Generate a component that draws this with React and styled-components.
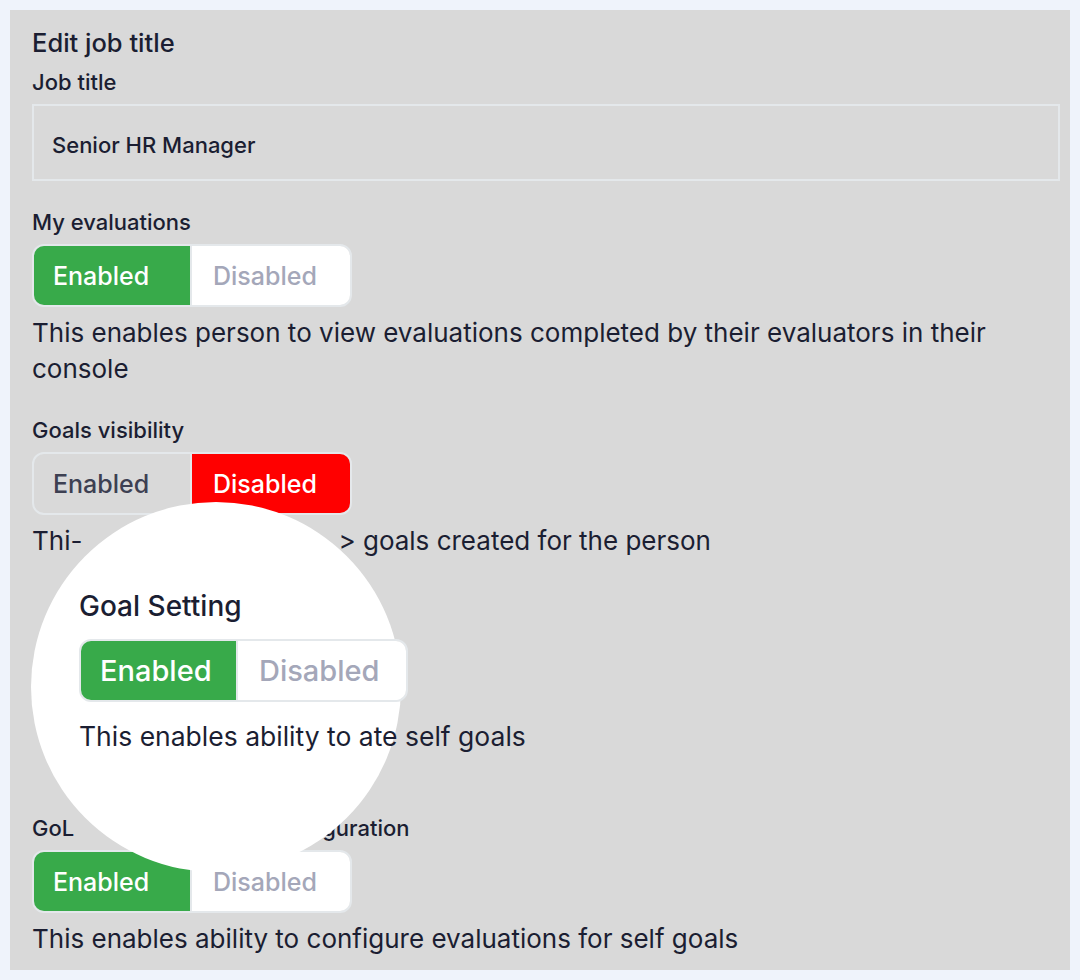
import styled, { createGlobalStyle } from "styled-components";

const GlobalStyle = createGlobalStyle`
  * { box-sizing: border-box; }
  body {
    margin: 0;
    background: #eff3fb;
    font-family: Inter, "Noto Sans", sans-serif;
    color: #1b1e32;
  }
`;

const Page = styled.div`
  padding: 10px;
  width: 1080px;
  height: 980px;
`;

const Panel = styled.div`
  position: relative;
  width: 1060px;
  height: 960px;
  background: #d9d9d9;
  padding: 18px 10px 0 22px;
  display: flex;
  flex-direction: column;
  overflow: hidden;
`;

const Title = styled.h2`
  margin: 0;
  font-size: 25.5px;
  line-height: 30px;
  font-weight: 500;
`;

const Label = styled.div`
  font-size: 22px;
  line-height: 26px;
  font-weight: 500;
  margin-top: ${(p) => p.$top || 0}px;
  display: flex;
  gap: ${(p) => p.$gap || 0}px;
`;

const Input = styled.div`
  margin-top: 9px;
  height: 77px;
  flex-shrink: 0;
  border: 2px solid #e4e8eb;
  display: flex;
  align-items: center;
  padding: 5px 18px 0;
  font-size: 22px;
  font-weight: 500;
`;

const Toggle = styled.div`
  margin-top: ${(p) => p.$top || 9}px;
  display: flex;
  align-self: flex-start;
  flex-shrink: 0;
  height: 63px;
  border: 2px solid #e4e8eb;
  border-radius: 12px;
  overflow: hidden;
`;

const Option = styled.div`
  width: ${(p) => p.$w}px;
  display: flex;
  align-items: center;
  padding-left: 19px;
  font-size: ${(p) => p.$size}px;
  font-weight: 500;
  background: ${(p) => p.$bg};
  color: ${(p) => p.$color};
  & + & {
    border-left: 2px solid #e4e8eb;
    padding-left: 21px;
  }
`;

const Desc = styled.p`
  margin: 8px 0 0;
  font-size: 26px;
  line-height: 36px;
  display: flex;
  flex-wrap: wrap;
  column-gap: ${(p) => p.$gap || 0}px;
`;

const Hidden = styled.div`
  height: ${(p) => p.$h}px;
  flex-shrink: 0;
`;

const Lens = styled.div`
  position: absolute;
  left: 21px;
  top: 492px;
  width: 370px;
  height: 370px;
  border-radius: 50%;
  background: #ffffff;
  z-index: 2;
`;

const LensContent = styled.div`
  position: absolute;
  left: 69px;
  top: 579px;
  z-index: 3;
  display: flex;
  flex-direction: column;
`;

const LensTitle = styled.div`
  font-size: 28px;
  line-height: 34px;
  font-weight: 500;
`;

const LensDesc = styled.div`
  margin-top: 17px;
  font-size: 26.5px;
  line-height: 34px;
`;

const states = {
  on: { bg: "#38aa4a", color: "#ffffff" },
  offIdle: { bg: "#ffffff", color: "#a4a7b9" },
  onIdle: { bg: "transparent", color: "#3d4052" },
  off: { bg: "#ff0000", color: "#ffffff" },
};

function Switch({ value, top, widths = [156, 160], size = 25 }) {
  const a = value === "enabled" ? states.on : states.onIdle;
  const b = value === "enabled" ? states.offIdle : states.off;
  return (
    <Toggle $top={top}>
      <Option $bg={a.bg} $color={a.color} $w={widths[0]} $size={size}>Enabled</Option>
      <Option $bg={b.bg} $color={b.color} $w={widths[1]} $size={size}>Disabled</Option>
    </Toggle>
  );
}

export default function App() {
  return (
    <Page>
      <GlobalStyle />
      <Panel>
        <Title>Edit job title</Title>
        <Label $top={11}>Job title</Label>
        <Input>Senior HR Manager</Input>

        <Label $top={28}>My evaluations</Label>
        <Switch value="enabled" />
        <Desc>This enables person to view evaluations completed by their evaluators in their console</Desc>

        <Label $top={30}>Goals visibility</Label>
        <Switch value="disabled" />
        <Desc $gap={256}>
          <span>Thi-</span>
          <span>&gt; goals created for the person</span>
        </Desc>

        <Hidden $h={256} />

        <Label $gap={248}>
          <span>GoL</span>
          <span>guration</span>
        </Label>
        <Switch value="enabled" />
        <Desc>This enables ability to configure evaluations for self goals</Desc>

        <Lens />
        <LensContent>
          <LensTitle>Goal Setting</LensTitle>
          <Switch value="enabled" top={16} widths={[155, 170]} size={29} />
          <LensDesc>This enables ability to ate self goals</LensDesc>
        </LensContent>
      </Panel>
    </Page>
  );
}
